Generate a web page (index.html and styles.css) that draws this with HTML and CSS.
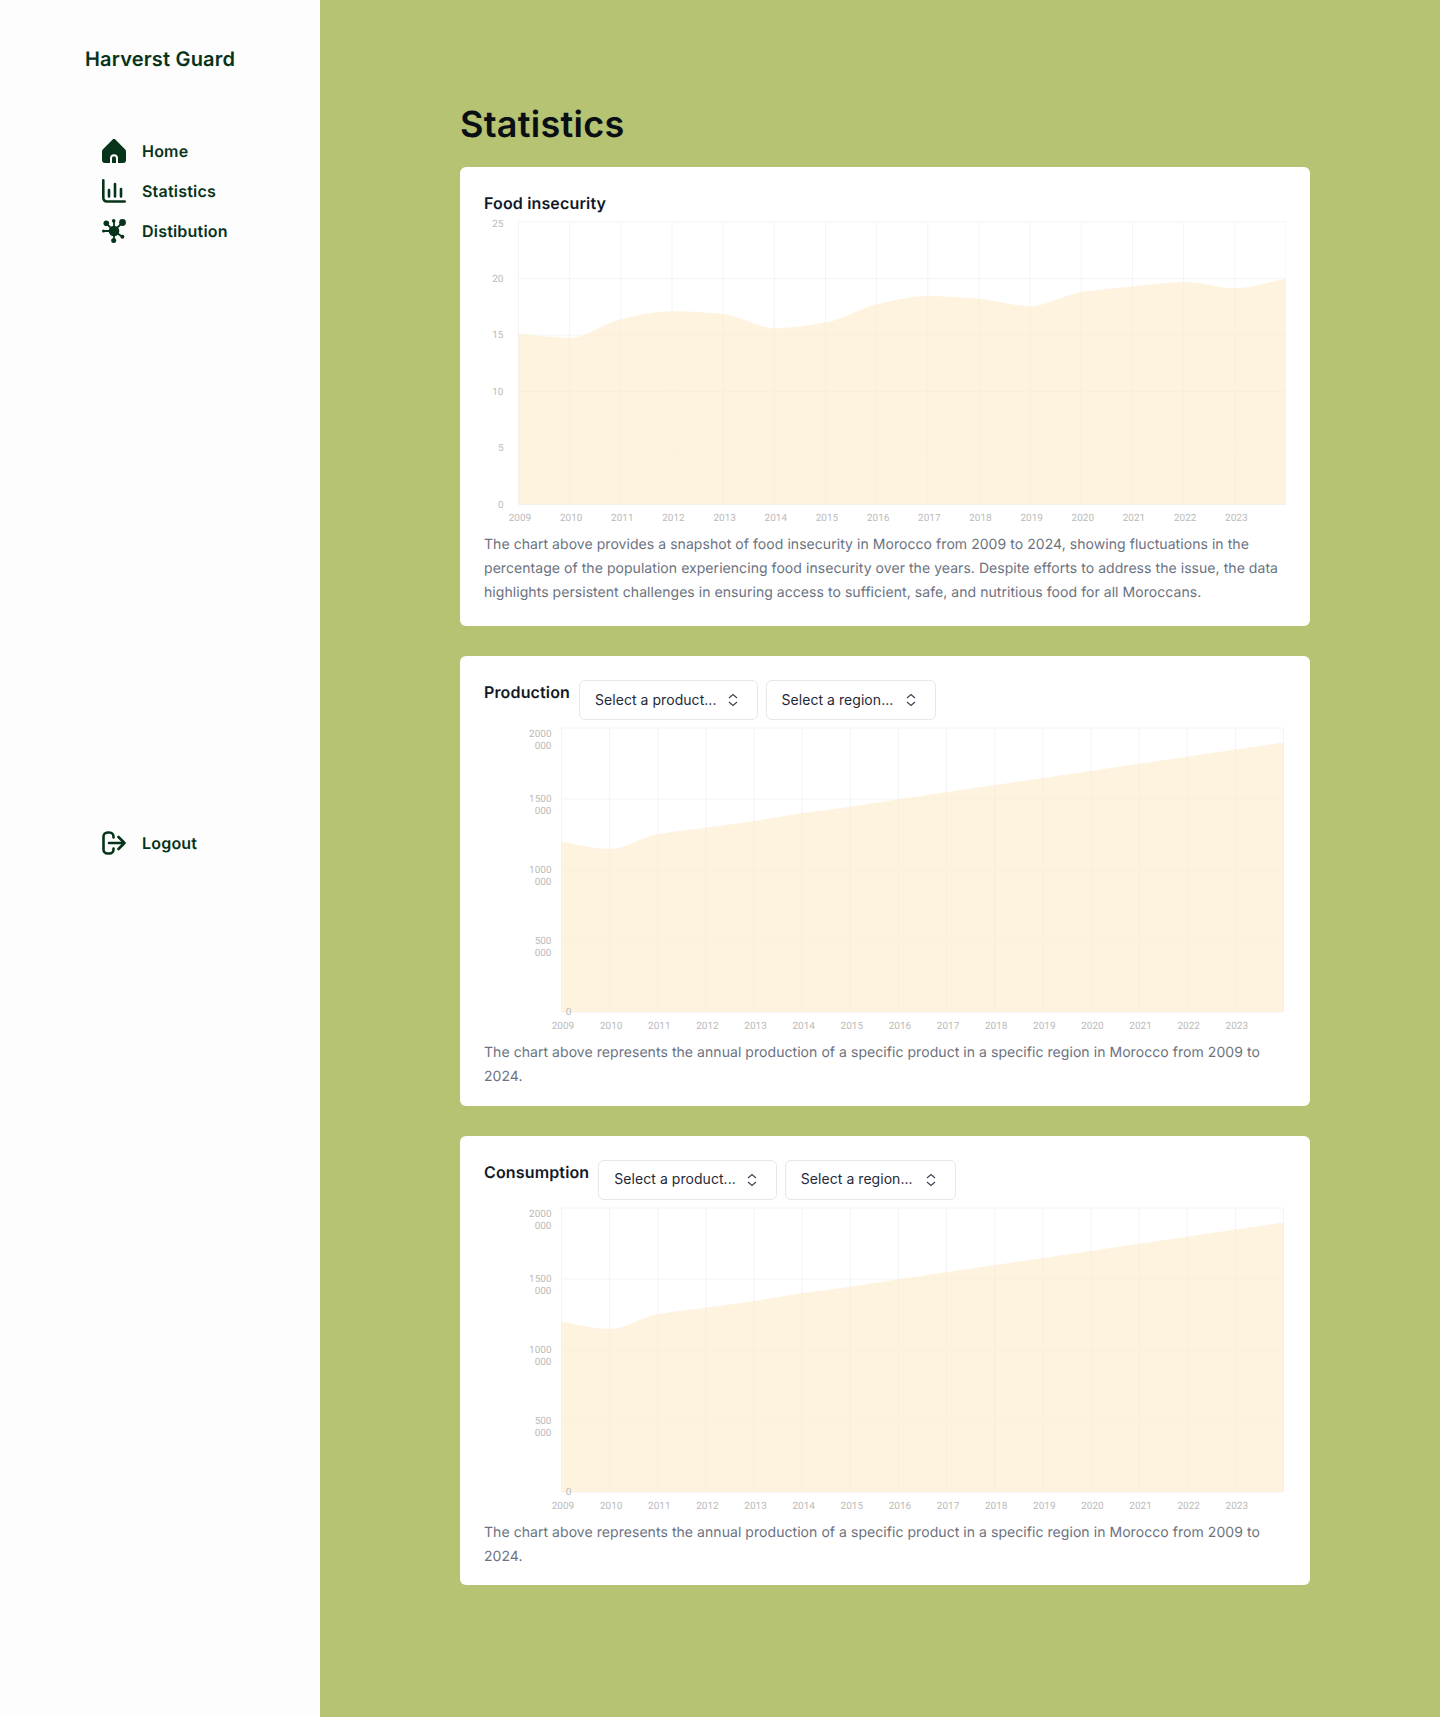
FILE: index.html
```html
<!DOCTYPE html>
<html lang="en">
<head>
    <meta charset="UTF-8">
    <meta name="viewport" content="width=device-width, initial-scale=1.0">
    <title>Statistics - Harverst Guard</title>
    <link rel="stylesheet" href="styles.css">
</head>
<body>
    <aside class="sidebar">
        <div class="logo">Harverst Guard</div>
        <nav class="nav">
            <a class="nav-item" href="#">
                <svg class="nav-icon" viewBox="0 0 24 24">
                    <path class="solid" d="M10.4 .7a2.2 2.2 0 0 1 3.2 0l9.4 9.6a3.4 3.4 0 0 1 1 2.4V21a3 3 0 0 1-3 3H3a3 3 0 0 1-3-3v-8.3a3.4 3.4 0 0 1 1-2.4z"/>
                    <path class="door" d="M9 24v-4.700a3 3 0 0 1 6 0V24"/>
                </svg>
                Home
            </a>
            <a class="nav-item" href="#">
                <svg class="nav-icon line" viewBox="0 0 24 24">
                    <path d="M1.300 1.300v17.700a3.500 3.500 0 0 0 3.500 3.500H22.700"/>
                    <path d="M7 11v6.500M13 5v12.500M19 10v7.500"/>
                </svg>
                Statistics
            </a>
            <a class="nav-item" href="#">
                <svg class="nav-icon" viewBox="0 0 24 24">
                    <path class="spoke" d="M12 12 20.300 3.700M12 12 4.300 4.300M12 12V2M12 12H1.300M12 12l8.300 5.700M12 12v9"/>
                    <circle class="solid" cx="12" cy="12" r="5.300"/>
                    <circle class="solid" cx="20.500" cy="3.500" r="3.400"/>
                    <circle class="solid" cx="4.300" cy="4.300" r="2.800"/>
                    <circle class="solid" cx="11.700" cy="1.900" r="1.800"/>
                    <circle class="solid" cx="1.500" cy="12" r="1.500"/>
                    <circle class="solid" cx="20.400" cy="17.700" r="2"/>
                    <circle class="solid" cx="11.700" cy="21.500" r="2.500"/>
                </svg>
                Distibution
            </a>
        </nav>
        <a class="nav-item logout" href="#">
            <svg class="nav-icon line" viewBox="0 0 24 24">
                <path d="M11.500 6.500V5.500a4 4 0 0 0-4-4H5.500a4 4 0 0 0-4 4v13a4 4 0 0 0 4 4h2a4 4 0 0 0 4-4v-1"/>
                <path d="M7 12h15.500M16.500 6l6 6-6 6"/>
            </svg>
            Logout
        </a>
    </aside>

    <main class="main">
        <h1 class="page-title">Statistics</h1>

        <section class="card card-first">
            <h2 class="card-title">Food insecurity</h2>
            <div class="chart chart-percent" id="chart-insecurity"></div>
            <p class="card-text">The chart above provides a snapshot of food insecurity in Morocco from 2009 to 2024, showing fluctuations in the percentage of the population experiencing food insecurity over the years. Despite efforts to address the issue, the data highlights persistent challenges in ensuring access to sufficient, safe, and nutritious food for all Moroccans.</p>
        </section>

        <section class="card">
            <div class="card-head">
                <h2 class="card-title">Production</h2>
                <button class="select" type="button"><span class="select-label">Select a product...</span>
                    <svg class="select-icon" viewBox="0 0 16 16"><path d="M4 6l4-3.500L12 6M4 10l4 3.500 4-3.500"/></svg>
                </button>
                <button class="select" type="button"><span class="select-label">Select a region...</span>
                    <svg class="select-icon" viewBox="0 0 16 16"><path d="M4 6l4-3.500L12 6M4 10l4 3.500 4-3.500"/></svg>
                </button>
            </div>
            <div class="chart" id="chart-production"></div>
            <p class="card-text">The chart above represents the annual production of a specific product in a specific region in Morocco from 2009 to 2024.</p>
        </section>

        <section class="card">
            <div class="card-head">
                <h2 class="card-title">Consumption</h2>
                <button class="select" type="button"><span class="select-label">Select a product...</span>
                    <svg class="select-icon" viewBox="0 0 16 16"><path d="M4 6l4-3.500L12 6M4 10l4 3.500 4-3.500"/></svg>
                </button>
                <button class="select" type="button"><span class="select-label">Select a region...</span>
                    <svg class="select-icon" viewBox="0 0 16 16"><path d="M4 6l4-3.500L12 6M4 10l4 3.500 4-3.500"/></svg>
                </button>
            </div>
            <div class="chart" id="chart-consumption"></div>
            <p class="card-text">The chart above represents the annual production of a specific product in a specific region in Morocco from 2009 to 2024.</p>
        </section>
    </main>

    <script src="chart.js"></script>
</body>
</html>
```

FILE: styles.css
```css
* {
    box-sizing: border-box;
}
body {
    margin: 0;
    min-height: 100vh;
    display: flex;
    font-family: Inter, "Liberation Sans", sans-serif;
    text-rendering: geometricPrecision;
    background-color: #b5c372;
}
.sidebar {
    width: 320px;
    flex-shrink: 0;
    padding: 47px 0 0 85px;
    background-color: #fdfdfd;
}
.logo {
    font-size: 20px;
    line-height: 24px;
    font-weight: 600;
    letter-spacing: .18px;
    color: #06331a;
}
.nav {
    display: flex;
    flex-direction: column;
    gap: 8px;
    margin-top: 64px;
}
.nav-item {
    display: flex;
    align-items: center;
    gap: 16px;
    height: 32px;
    margin-left: 17px;
    font-size: 16px;
    font-weight: 600;
    letter-spacing: .2px;
    color: #06331a;
    text-decoration: none;
}
.logout {
    margin-top: 580px;
}
.nav-icon {
    width: 24px;
    height: 24px;
    flex-shrink: 0;
}
.nav-icon .solid {
    fill: #06331a;
}
.nav-icon .door {
    fill: none;
    stroke: #fdfdfd;
    stroke-width: 2;
}
.nav-icon .spoke {
    fill: none;
    stroke: #06331a;
    stroke-width: 1.800;
}
.nav-icon.line path {
    fill: none;
    stroke: #06331a;
    stroke-width: 2.600;
    stroke-linecap: round;
    stroke-linejoin: round;
}
.main {
    flex: 1;
    padding: 104px 130px 0 140px;
}
.page-title {
    margin: 0 0 23px;
    font-size: 36px;
    line-height: 40px;
    font-weight: 600;
    letter-spacing: .27px;
    color: #0a0f14;
}
.card {
    margin-bottom: 30px;
    padding: 24px 24px 16.5px;
    background: #fff;
    border-radius: 6px;
}
.card-first {
    padding-bottom: 21px;
}
.card-title {
    margin: 0;
    font-size: 16px;
    line-height: 24px;
    font-weight: 600;
    letter-spacing: .15px;
    color: #111827;
}
.card-head {
    display: flex;
    align-items: flex-start;
    gap: 8px;
}
.card-head .card-title {
    margin-right: 1px;
}
.select {
    display: flex;
    align-items: center;
    justify-content: space-between;
    gap: 8px;
    height: 40px;
    padding: 0 16px 0 15px;
    font-family: inherit;
    font-size: 14px;
    letter-spacing: .05px;
    color: #1f2937;
    background: #fff;
    border: 1px solid #e5e7eb;
    border-radius: 6px;
}
.select + .select {
    gap: 10px;
}
.select-label {
    margin-top: -2px;
}
.select-icon {
    width: 16px;
    height: 16px;
    fill: none;
    stroke: #374151;
    stroke-width: 1.100;
}
.chart {
    height: 317px;
    margin-top: 4px;
}
.chart-percent {
    height: 317px;
    margin-top: 1px;
}
.chart svg {
    display: block;
    width: 100%;
    height: 100%;
}
.grid-line {
    stroke: #f3f4f6;
    stroke-width: 1;
}
.area {
    fill: #fdebc8;
    fill-opacity: .6;
}
.tick {
    font-family: Roboto, sans-serif;
    font-size: 10px;
    fill: #bbbbbb;
}
.card-text {
    margin: 0;
    font-size: 14px;
    line-height: 24px;
    letter-spacing: .056px;
    color: #6b7280;
}
```

FILE: chart.js
```js
var years = [2009, 2010, 2011, 2012, 2013, 2014, 2015, 2016, 2017, 2018, 2019, 2020, 2021, 2022, 2023];

var insecurity = [15.1, 14.75, 16.4, 17.1, 16.85, 15.6, 16.1, 17.7, 18.45, 18.2, 17.55, 18.8, 19.3, 19.7, 19.15, 20];
var production = [1199, 1148, 1253, 1298, 1345, 1399, 1446, 1498, 1548, 1598, 1648, 1698, 1748, 1798, 1848, 1898];

function el(name, attrs, text) {
    var node = document.createElementNS('http://www.w3.org/2000/svg', name);
    for (var key in attrs) node.setAttribute(key, attrs[key]);
    if (text !== undefined) node.textContent = text;
    return node;
}

// monotone curve, same look as the chart lib had
function smoothPath(points) {
    var slopes = [];
    var tangents = [];
    var i;
    for (i = 0; i < points.length - 1; i++) {
        slopes.push((points[i + 1][1] - points[i][1]) / (points[i + 1][0] - points[i][0]));
    }
    tangents.push(slopes[0]);
    for (i = 1; i < slopes.length; i++) {
        if (slopes[i - 1] * slopes[i] <= 0) tangents.push(0);
        else tangents.push(2 * slopes[i - 1] * slopes[i] / (slopes[i - 1] + slopes[i]));
    }
    tangents.push(slopes[slopes.length - 1]);

    var d = 'M' + points[0][0] + ' ' + points[0][1];
    for (i = 0; i < points.length - 1; i++) {
        var dx = (points[i + 1][0] - points[i][0]) / 3;
        d += 'C' + (points[i][0] + dx) + ' ' + (points[i][1] + tangents[i] * dx) + ' ' +
            (points[i + 1][0] - dx) + ' ' + (points[i + 1][1] - tangents[i + 1] * dx) + ' ' +
            points[i + 1][0] + ' ' + points[i + 1][1];
    }
    return d;
}

function drawChart(id, opts) {
    var box = document.getElementById(id);
    var height = box.clientHeight;
    var svg = el('svg', { viewBox: '0 0 802 ' + height });
    var left = opts.left, top = opts.top, w = opts.width, h = opts.height;
    var bottom = top + h;
    var step = w / 15;
    var i;

    for (i = 0; i <= 15; i++) {
        svg.appendChild(el('line', { class: 'grid-line', x1: left + i * step, x2: left + i * step, y1: top, y2: bottom }));
    }
    opts.ticks.forEach(function (tick, n) {
        var y = bottom - n * h / (opts.ticks.length - 1);
        svg.appendChild(el('line', { class: 'grid-line', x1: left, x2: left + w, y1: y, y2: y }));
    });

    var points = opts.data.map(function (v, n) {
        return [left + n * step, bottom - v / opts.max * h];
    });
    svg.appendChild(el('path', {
        class: 'area',
        d: smoothPath(points) + 'L' + (left + w) + ' ' + bottom + 'L' + left + ' ' + bottom + 'Z'
    }));

    opts.ticks.forEach(function (tick, n) {
        var y = bottom - n * h / (opts.ticks.length - 1);
        if (n === opts.ticks.length - 1) y += opts.topShift;
        if (n === 0) y += opts.zeroShift;
        var x = n === 0 && opts.zeroX ? opts.zeroX : opts.labelX;
        var anchor = n === 0 && opts.zeroX ? 'middle' : 'end';
        tick.forEach(function (line, k) {
            svg.appendChild(el('text', { class: 'tick', x: x, y: y + 3.300 + k * 12, 'text-anchor': anchor }, line));
        });
    });

    years.forEach(function (year, n) {
        svg.appendChild(el('text', { class: 'tick', x: left + 1.500 + n * step, y: bottom + 16.500, 'text-anchor': 'middle' }, year));
    });

    box.appendChild(svg);
}

drawChart('chart-insecurity', {
    data: insecurity, max: 25,
    left: 34.5, top: 6, width: 767.5, height: 282.5,
    labelX: 19.5, topShift: 2, zeroShift: 0,
    ticks: [['0'], ['5'], ['10'], ['15'], ['20'], ['25']]
});

var thousands = {
    data: production, max: 2000,
    left: 77.5, top: 4, width: 722, height: 284,
    labelX: 67.5, topShift: 6, zeroShift: 0, zeroX: 84.5,
    ticks: [['0'], ['500', '000'], ['1000', '000'], ['1500', '000'], ['2000', '000']]
};
drawChart('chart-production', thousands);
drawChart('chart-consumption', thousands);
```
